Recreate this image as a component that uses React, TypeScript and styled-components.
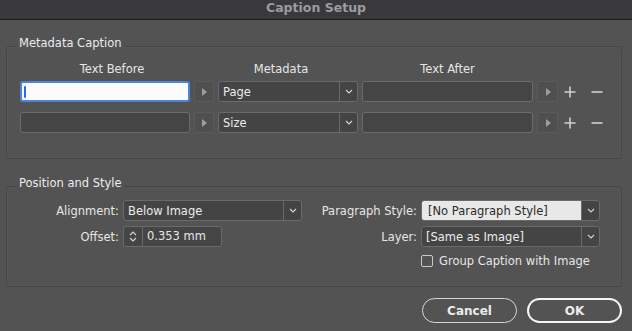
import React from "react";
import styled, {createGlobalStyle} from "styled-components";

const GlobalStyle = createGlobalStyle`
  html, body {
    margin: 0;
    padding: 0;
    background: #535353;
  }
  body {
    font-family: "DejaVu Sans", "Liberation Sans", sans-serif;
    font-size: 11px;
    color: #e6e6e6;
  }
`

const Window = styled.div`
  width: 632px;
  height: 331px;
  background: #535353;
  display: flex;
  flex-direction: column;
  overflow: hidden;
`

const TitleBar = styled.div`
  height: 20px;
  flex-shrink: 0;
  box-sizing: border-box;
  padding-top: 1px;
  background: #39383d;
  border-bottom: 1px solid #1c1c1e;
  display: flex;
  justify-content: center;
  align-items: flex-start;
  color: #9c9c9e;
  font-weight: bold;
  font-size: 12.5px;
  line-height: 14px;
`

const Body = styled.div`
  padding: 16px 10px 0 6px;
  display: flex;
  flex-direction: column;
`

const Group = styled.fieldset<{$bottom: number}>`
  margin: 0;
  padding: 0 0 ${p => p.$bottom}px 13px;
  border: 1px solid #464646;
  border-radius: 3px;
  box-shadow: inset 0 0 0 1px rgba(255, 255, 255, 0.02);
  min-width: 0;
`

const Legend = styled.legend`
  margin-left: -4px;
  padding: 0 3px 6px;
  line-height: 14px;
  font-size: 11.5px;
  color: #ececec;
`

const MetaGrid = styled.div`
  display: grid;
  grid-template-columns: 170px 20px 140px 171px 21px 16px 30px;
  column-gap: 4px;
  row-gap: 10px;
  margin-top: 6px;
  align-items: center;
`

const ColHeader = styled.div<{$shift?: number}>`
  text-align: center;
  line-height: 14px;
  margin-bottom: -5px;
  transform: translateX(${p => p.$shift ?? 0}px);
  font-size: 11.5px;
`

const TextField = styled.div<{$focused?: boolean}>`
  box-sizing: border-box;
  height: 21px;
  background: ${p => (p.$focused ? "#fbfbfb" : "#454545")};
  border: ${p => (p.$focused ? "2px solid #4a85d6" : "1px solid #6c6c6c")};
  border-radius: 3px;
  display: flex;
  align-items: center;
  padding-left: ${p => (p.$focused ? 2 : 4)}px;
  line-height: 14px;
`

const Caret = styled.span`
  width: 2px;
  height: 12px;
  background: #1d6ef2;
  border-radius: 1px;
`

const ArrowButton = styled.div`
  box-sizing: border-box;
  height: 21px;
  background: #4f4f4f;
  border: 1px solid #5b5b5b;
  border-radius: 2px;
  display: flex;
  align-items: center;
  justify-content: center;
`

const Triangle = styled.span`
  width: 0;
  height: 0;
  border-top: 4px solid transparent;
  border-bottom: 4px solid transparent;
  border-left: 5px solid #9e9e9e;
  margin-left: 1px;
`

const IconCell = styled.div`
  display: flex;
  justify-content: center;
  align-items: center;
  height: 21px;
`

const Select = styled.div`
  box-sizing: border-box;
  height: 21px;
  background: #444444;
  border: 1px solid #6a6a6a;
  border-radius: 3px;
  display: flex;
  overflow: hidden;
`

const SelectValue = styled.div<{$light?: boolean}>`
  flex: 1;
  display: flex;
  align-items: center;
  padding-left: ${p => (p.$light ? 6 : 4)}px;
  background: ${p => (p.$light ? "#e8e8e8" : "transparent")};
  color: ${p => (p.$light ? "#2a2a2a" : "#ececec")};
  font-size: 11.5px;
`

const SelectChevron = styled.div`
  width: 17px;
  border-left: 1px solid #6a6a6a;
  display: flex;
  align-items: center;
  justify-content: center;
`

const StyleGrid = styled.div`
  display: grid;
  grid-template-columns: 99px 179px 111px 179px;
  column-gap: 4px;
  row-gap: 5px;
  margin-top: 4px;
  align-items: center;
`

const FieldLabel = styled.div`
  text-align: right;
  font-size: 11.5px;
`

const Spinner = styled.div`
  display: flex;
  height: 21px;
  width: 99px;
  box-sizing: border-box;
  border: 1px solid #6a6a6a;
  border-radius: 3px;
  background: #454545;
  overflow: hidden;
`

const SpinButtons = styled.div`
  width: 18px;
  border-right: 1px solid #6a6a6a;
  display: flex;
  flex-direction: column;
  align-items: center;
  justify-content: center;
  gap: 1px;
`

const SpinValue = styled.div`
  flex: 1;
  display: flex;
  align-items: center;
  padding-left: 4px;
  font-size: 11.5px;
  padding-bottom: 2px;
`

const CheckRow = styled.label`
  grid-column: 4;
  display: flex;
  align-items: center;
  gap: 6px;
  margin-top: 2px;
  font-size: 11.5px;
`

const CheckBox = styled.span`
  width: 12px;
  height: 12px;
  box-sizing: border-box;
  border: 1px solid #c9c9c9;
  border-radius: 2px;
`

const Spacer = styled.div`
  height: 17px;
`

const Footer = styled.div`
  display: flex;
  justify-content: flex-end;
  gap: 10px;
  margin-top: 11px;
`

const Button = styled.button<{$primary?: boolean}>`
  box-sizing: border-box;
  width: 95px;
  height: 25px;
  border-radius: 13px;
  background: transparent;
  border: ${p => (p.$primary ? "2px solid #f4f4f4" : "1.5px solid #d6d6d6")};
  color: #ececec;
  font-family: "DejaVu Sans", sans-serif;
  font-size: 12px;
  font-weight: bold;
  padding: 0;
`

const Chevron = ({up}: {up?: boolean}) => (
    <svg width="8" height="5" viewBox="0 0 8 5">
        <path d={up ? "M1 4 L4 1 L7 4" : "M1 1 L4 4 L7 1"} fill="none" stroke="#d4d4d4" strokeWidth="1.1"/>
    </svg>
)

const Plus = () => (
    <svg width="12" height="12" viewBox="0 0 12 12">
        <path d="M6 0.5 V11.5 M0.5 6 H11.5" stroke="#d0d0d0" strokeWidth="1.6"/>
    </svg>
)

const Minus = () => (
    <svg width="12" height="12" viewBox="0 0 12 12">
        <path d="M0.5 6 H11.5" stroke="#d0d0d0" strokeWidth="1.6"/>
    </svg>
)

const Dropdown = ({value, light}: { value: string, light?: boolean }) => (
    <Select>
        <SelectValue $light={light}>{value}</SelectValue>
        <SelectChevron><Chevron/></SelectChevron>
    </Select>
)

const rows = ["Page", "Size"]

const App = () => {
    return (
        <Window>
            <GlobalStyle/>
            <TitleBar>Caption Setup</TitleBar>
            <Body>
                <Group $bottom={25}>
                    <Legend>Metadata Caption</Legend>
                    <MetaGrid>
                        <ColHeader $shift={7}>Text Before</ColHeader>
                        <div/>
                        <ColHeader $shift={-7}>Metadata</ColHeader>
                        <ColHeader>Text After</ColHeader>
                        <div/>
                        <div/>
                        <div/>
                        {rows.map((r, i) => (
                            <React.Fragment key={r}>
                                <TextField $focused={i === 0}>{i === 0 && <Caret/>}</TextField>
                                <ArrowButton><Triangle/></ArrowButton>
                                <Dropdown value={r}/>
                                <TextField/>
                                <ArrowButton><Triangle/></ArrowButton>
                                <IconCell><Plus/></IconCell>
                                <IconCell><Minus/></IconCell>
                            </React.Fragment>
                        ))}
                    </MetaGrid>
                </Group>
                <Spacer/>
                <Group $bottom={18}>
                    <Legend>Position and Style</Legend>
                    <StyleGrid>
                        <FieldLabel>Alignment:</FieldLabel>
                        <Dropdown value="Below Image"/>
                        <FieldLabel>Paragraph Style:</FieldLabel>
                        <Dropdown value="[No Paragraph Style]" light/>
                        <FieldLabel>Offset:</FieldLabel>
                        <Spinner>
                            <SpinButtons><Chevron up/><Chevron/></SpinButtons>
                            <SpinValue>0.353 mm</SpinValue>
                        </Spinner>
                        <FieldLabel>Layer:</FieldLabel>
                        <Dropdown value="[Same as Image]"/>
                        <CheckRow><CheckBox/>Group Caption with Image</CheckRow>
                    </StyleGrid>
                </Group>
                <Footer>
                    <Button>Cancel</Button>
                    <Button $primary>OK</Button>
                </Footer>
            </Body>
        </Window>
    );
}

export default App;
